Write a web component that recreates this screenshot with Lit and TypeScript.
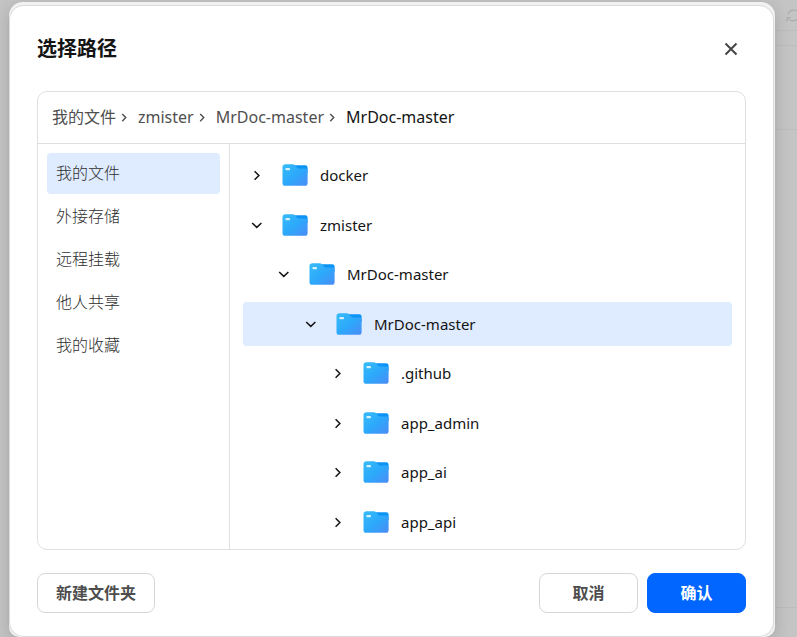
import { LitElement, html, css } from "lit";
import { customElement, state } from "lit/decorators.js";
import { classMap } from "lit/directives/class-map.js";

interface TreeNode {
  name: string;
  level: number;
  open: boolean;
  selected?: boolean;
}

const LOCATIONS = ["我的文件", "外接存储", "远程挂载", "他人共享", "我的收藏"];
const CRUMBS = ["我的文件", "zmister", "MrDoc-master", "MrDoc-master"];
const NODES: TreeNode[] = [
  { name: "docker", level: 0, open: false },
  { name: "zmister", level: 0, open: true },
  { name: "MrDoc-master", level: 1, open: true },
  { name: "MrDoc-master", level: 2, open: true, selected: true },
  { name: ".github", level: 3, open: false },
  { name: "app_admin", level: 3, open: false },
  { name: "app_ai", level: 3, open: false },
  { name: "app_api", level: 3, open: false },
];

const chevronRight = html`<svg class="chev" viewBox="0 0 16 16" aria-hidden="true">
  <path d="M5.6 4.2 L9.9 8.5 L5.6 12.8" fill="none" stroke="currentColor" stroke-width="1.5" />
</svg>`;
const chevronDown = html`<svg class="chev" viewBox="0 0 16 16" aria-hidden="true">
  <path d="M3.2 6 L7.8 10.4 L12.4 6" fill="none" stroke="currentColor" stroke-width="1.5" />
</svg>`;
const crumbChevron = html`<svg class="sep" viewBox="0 0 8 12" aria-hidden="true">
  <path d="M2.200 2.900 L5.800 6.600 L2.200 10.300" fill="none" stroke="currentColor" stroke-width="1.400" />
</svg>`;
const folder = html`<svg class="folder" viewBox="0 0 26 22" aria-hidden="true">
  <defs>
    <linearGradient id="front" x1="0" y1="0" x2="1" y2="1">
      <stop offset="0" stop-color="#38bcf8" />
      <stop offset="0.5" stop-color="#2ca9fb" />
      <stop offset="1" stop-color="#4b8cf5" />
    </linearGradient>
  </defs>
  <path d="M10 1.200h13.200a2.400 2.400 0 0 1 2.400 2.400V9H10z" fill="#0b93f6" />
  <path d="M3.400 .3H10.800c.9 0 1.500.3 2.100.9l2.100 2.200c.6.7 1.200 1 2.100 1H23.600c1.300 0 2 .7 2 1.800V19.200c0 1.700-1 2.600-2.700 2.600H3.200C1.500 21.800.5 20.900.5 19.200V3.100C.5 1.300 1.700.3 3.400.3z" fill="url(#front)" />
  <rect x="3.400" y="4" width="4.600" height="2.200" rx="0.800" fill="#d3f1ff" />
</svg>`;

@customElement("app-root")
export class AppRoot extends LitElement {
  @state() private location = 0;

  static styles = css`
    :host {
      display: block;
      min-height: 100vh;
      box-sizing: border-box;
      background: #c4c4c4;
      color: #141414;
      font: 16px/24px "Noto Sans", "Noto Sans CJK SC", sans-serif;
      position: relative;
      overflow: hidden;
    }
    * { box-sizing: border-box; }
    button { font: inherit; cursor: pointer; }
    .page {
      position: absolute;
      inset: 0 0 0 auto;
      width: 24px;
      color: #acacac;
    }
    .refresh { position: absolute; right: -4px; top: 8px; width: 15px; height: 15px; }
    .line { position: absolute; left: 0; right: 0; height: 1px; background: #bcbcbc; }
    .line.a { top: 30px; }
    .line.b { top: 45px; }
    .line.c { top: 129px; }
    .line.d { bottom: 29px; }
    .frame {
      position: relative;
      margin: 2px 22px 0 9px;
      padding: 4px 2px 1px 1px;
      height: calc(100vh - 2px);
      min-height: 540px;
      background: #f2f2f2;
      border-radius: 14px 14px 10px 10px;
      box-shadow: 0 4px 16px rgba(0, 0, 0, 0.16);
    }
    .dialog {
      height: 100%;
      display: flex;
      flex-direction: column;
      padding: 0 27px 23px;
      background: #fff;
      border-radius: 14px;
      box-shadow: 0 0 1px 1px rgba(0, 0, 0, 0.1);
    }
    header {
      display: flex;
      align-items: center;
      justify-content: space-between;
      height: 85px;
      padding-top: 1px;
      flex: none;
    }
    h1 { margin: 0; font-size: 20px; line-height: 28px; font-weight: 700; }
    .close {
      display: grid;
      place-items: center;
      width: 30px;
      height: 30px;
      padding: 0;
      border: 0;
      background: none;
      color: #454547;
    }
    .close svg { width: 14px; height: 14px; }
    .panel {
      flex: 1;
      min-height: 0;
      display: flex;
      flex-direction: column;
      border: 1px solid #dfdfdf;
      border-radius: 10px;
      overflow: hidden;
    }
    .crumbs {
      display: flex;
      align-items: center;
      height: 52px;
      flex: none;
      padding: 0 14px 2px;
      border-bottom: 1px solid #dfdfdf;
      color: #505050;
    }
    .crumbs a { color: inherit; text-decoration: none; }
    .crumbs a.current { color: #141414; }
    .sep { width: 8px; height: 12px; margin: 0 10px 0 4px; }
    .body { flex: 1; min-height: 0; display: flex; }
    nav.side {
      width: 192px;
      flex: none;
      padding: 9px;
      border-right: 1px solid #dfdfdf;
      display: flex;
      flex-direction: column;
      gap: 2px;
    }
    .loc {
      height: 41px;
      padding: 0 9px 2px;
      border: 0;
      border-radius: 4px;
      background: none;
      color: #2e2e2e;
      font-weight: 300;
      text-align: left;
    }
    .loc.on { background: #dfebff; }
    .tree {
      flex: 1;
      margin: 0;
      padding: 9px 13px 5px;
      list-style: none;
      display: grid;
      grid-auto-rows: 1fr;
      gap: 5px;
      font-size: 15px;
    }
    .row { display: flex; align-items: center; border-radius: 4px; padding-left: 6px; }
    .row.selected { background: #dfebff; }
    .indent { width: 27px; }
    .toggle {
      display: flex;
      padding: 0;
      border: 0;
      background: none;
      color: #141414;
      margin-right: 17px;
    }
    .chev { width: 16px; height: 16px; }
    .folder { width: 26px; height: 22px; margin-right: 12px; }
    footer { display: flex; gap: 9px; margin-top: 23px; flex: none; }
    .btn {
      height: 40px;
      min-width: 99px;
      padding: 0 18px;
      border: 1px solid #d6d6d6;
      border-radius: 8px;
      background: #fff;
      color: #4d4d4d;
      font-weight: 700;
    }
    .btn.new { margin-right: auto; }
    .btn.primary { background: #0066ff; border-color: #0066ff; color: #fff; }
  `;

  render() {
    return html`
      <div class="page">
        <i class="line a"></i><i class="line b"></i><i class="line c"></i><i class="line d"></i>
        <svg class="refresh" viewBox="0 0 15 15" aria-hidden="true">
          <path d="M2 6.500A6 6 0 0 1 13 5M1 9.500v4M1 9.500h4M2.500 10.500A6 6 0 0 0 13 8.500" fill="none" stroke="currentColor" stroke-width="1.200" />
        </svg>
      </div>
      <div class="frame">
        <section class="dialog" role="dialog" aria-labelledby="title">
          <header>
            <h1 id="title">选择路径</h1>
            <button class="close" aria-label="关闭">
              <svg viewBox="0 0 14 14"><path d="M1.500 1.500 L12.500 12.500 M12.500 1.500 L1.500 12.500" stroke="currentColor" stroke-width="2" /></svg>
            </button>
          </header>
          <div class="panel">
            <nav class="crumbs">
              ${CRUMBS.map((c, i) => html`${i ? crumbChevron : ""}<a href="#" class=${classMap({ current: i === CRUMBS.length - 1 })}>${c}</a>`)}
            </nav>
            <div class="body">
              <nav class="side">
                ${LOCATIONS.map((l, i) => html`<button class=${classMap({ loc: true, on: i === this.location })} @click=${() => (this.location = i)}>${l}</button>`)}
              </nav>
              <ul class="tree" role="tree">
                ${NODES.map((n) => html`<li class=${classMap({ row: true, selected: !!n.selected })} role="treeitem">
                  ${Array.from({ length: n.level }, () => html`<span class="indent"></span>`)}
                  <button class="toggle" aria-label=${n.name}>${n.open ? chevronDown : chevronRight}</button>
                  ${folder}<span>${n.name}</span>
                </li>`)}
              </ul>
            </div>
          </div>
          <footer>
            <button class="btn new">新建文件夹</button>
            <button class="btn">取消</button>
            <button class="btn primary">确认</button>
          </footer>
        </section>
      </div>
    `;
  }
}
